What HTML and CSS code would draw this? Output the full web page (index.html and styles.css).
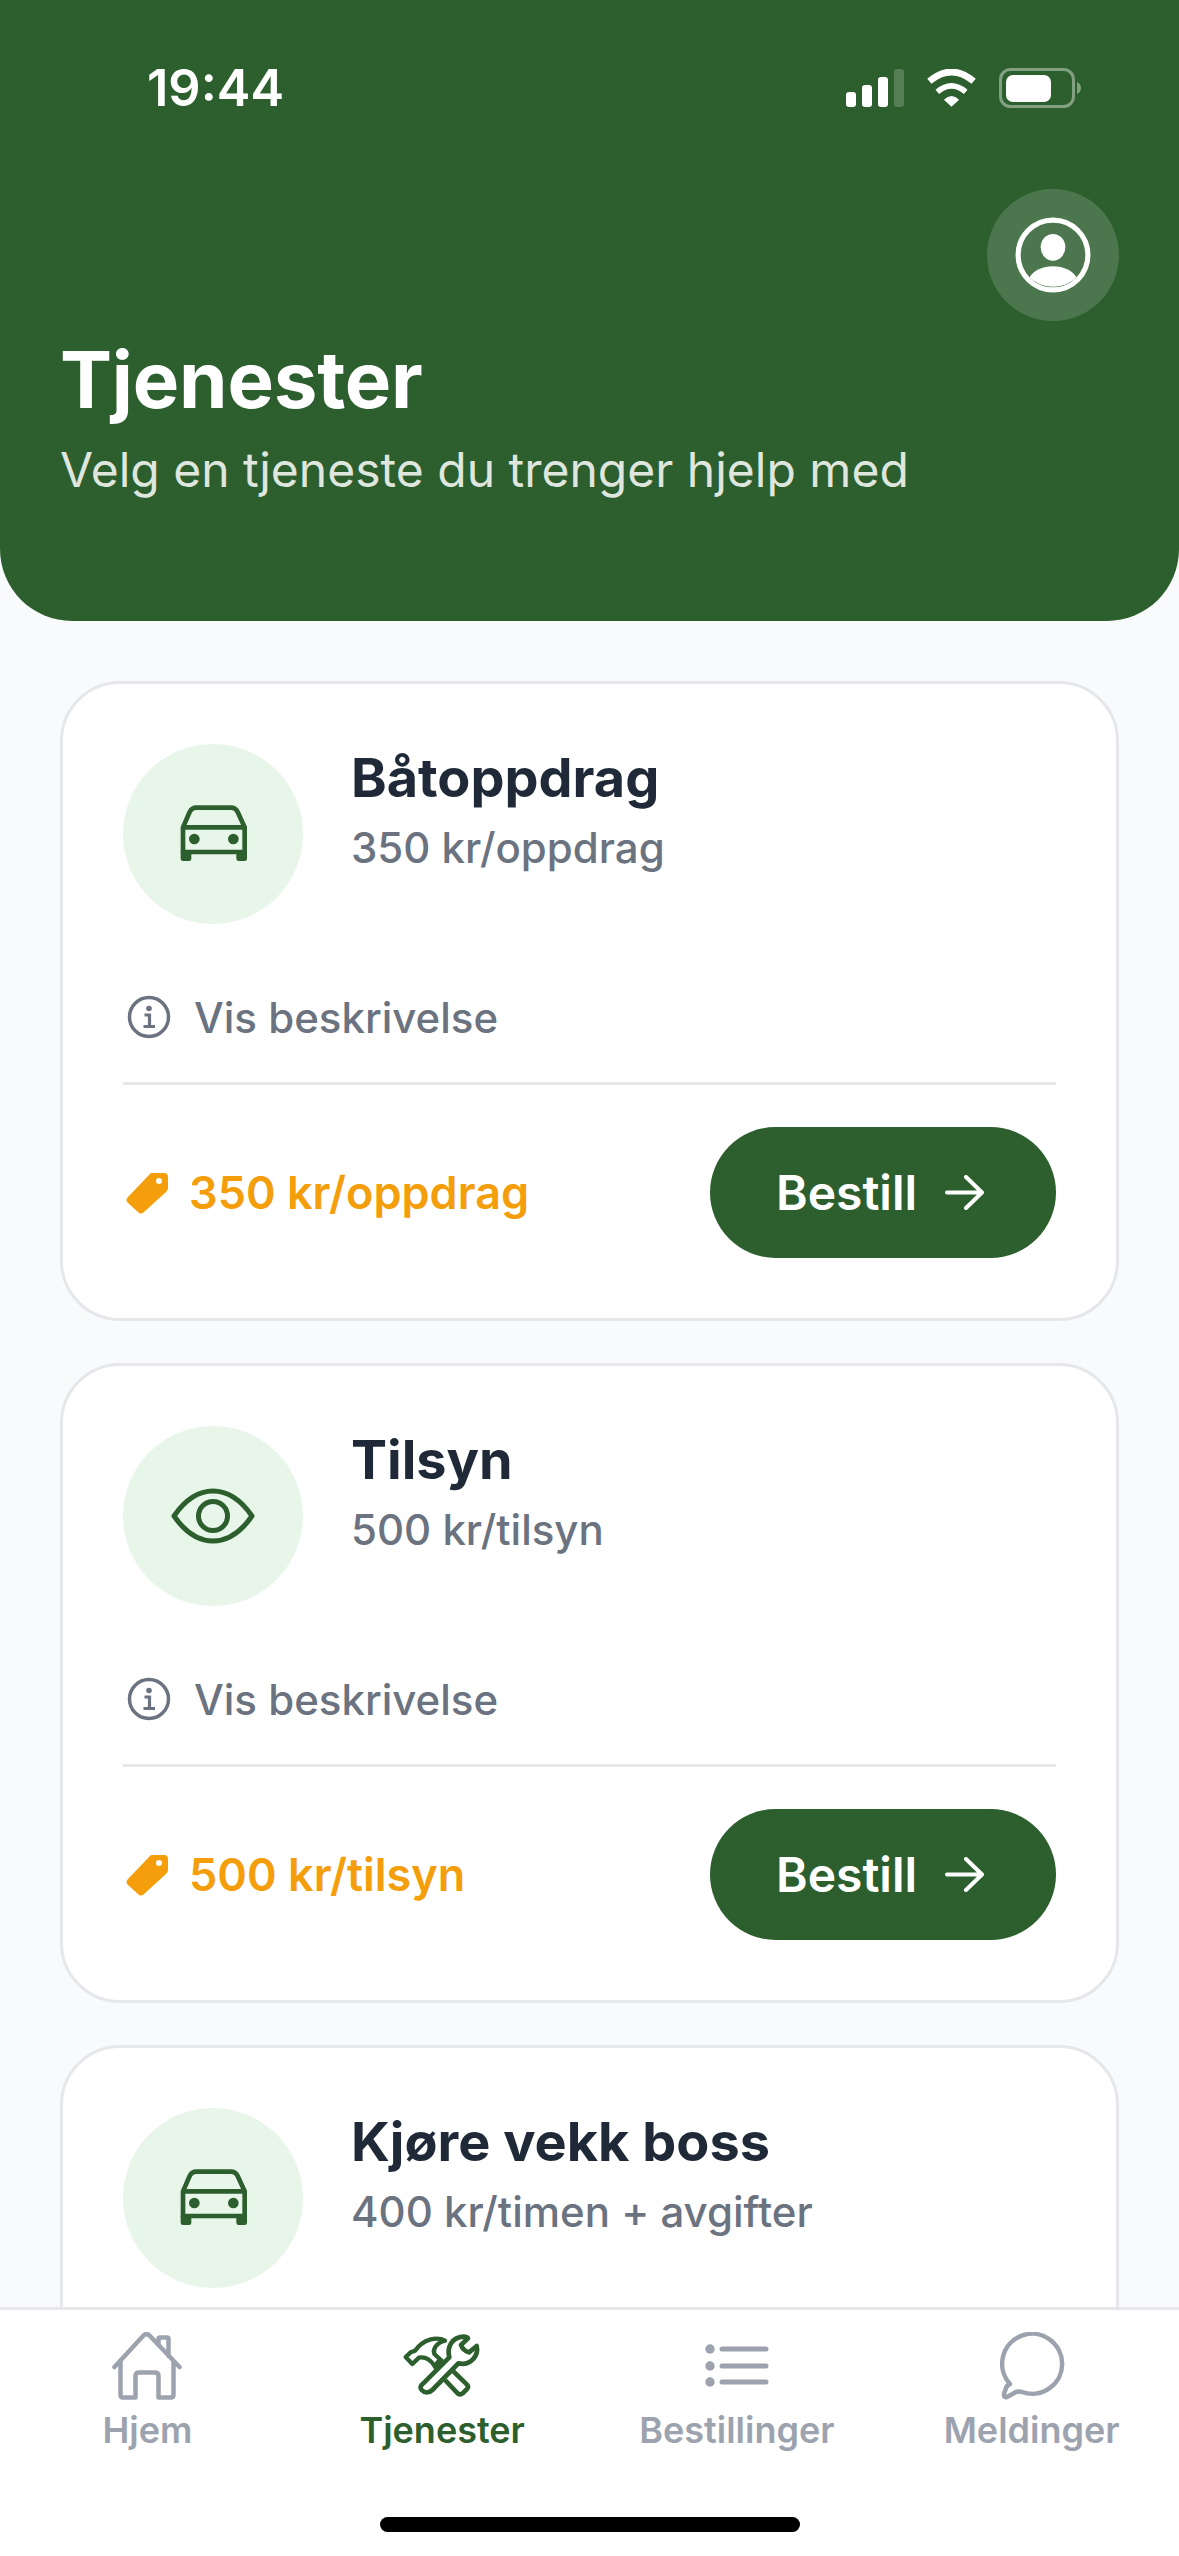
FILE: index.html
```html
<!DOCTYPE html>
<html lang="no">
  <head>
    <meta charset="utf-8">
    <meta name="viewport" content="width=device-width, initial-scale=1.0">
    <title>Tjenester</title>
    <link rel="stylesheet" href="styles.css">
  </head>
  <body>
    <header class="header">
      <div class="status-bar">
        <span class="time">19:44</span>
        <div class="status-icons">
          <svg class="signal" width="58" height="38" viewBox="0 0 58 38">
            <rect x="0" y="23" width="10" height="15" rx="3" fill="#fff"/>
            <rect x="16" y="16" width="10" height="22" rx="3" fill="#fff"/>
            <rect x="32" y="8" width="10" height="30" rx="3" fill="#fff"/>
            <rect x="48" y="0" width="10" height="38" rx="3" fill="#fff" opacity="0.2"/>
          </svg>
          <svg class="wifi" width="53" height="38" viewBox="375 85 160 115">
            <path d="M388 122 Q455 66 522 122" fill="none" stroke="#fff" stroke-width="20"/>
            <path d="M412 154 Q455 118 498 154" fill="none" stroke="#fff" stroke-width="17"/>
            <path d="M432 178 Q455 156 478 178 L455 199 Z" fill="#fff"/>
          </svg>
          <svg class="battery" width="83" height="40" viewBox="0 0 83 40">
            <rect x="1.5" y="1.5" width="73" height="37" rx="10" fill="none" stroke="#fff" stroke-opacity="0.4" stroke-width="3"/>
            <rect x="7" y="7" width="45" height="27" rx="7" fill="#fff"/>
            <path d="M78 14 Q82 16 82 20 Q82 24 78 26 Z" fill="#fff" opacity="0.4"/>
          </svg>
        </div>
      </div>
      <div class="profile-row">
        <button class="profile-btn">
          <svg width="76" height="76" viewBox="0 0 74 74">
            <circle cx="37" cy="37" r="34" fill="none" stroke="#fff" stroke-width="5"/>
            <ellipse cx="37" cy="29.5" rx="12" ry="13" fill="#fff"/>
            <path d="M14 59 C18 52 27 48 37 48 C47 48 56 52 60 59 A34 34 0 0 1 14 59 Z" fill="#fff"/>
          </svg>
        </button>
      </div>
      <h1>Tjenester</h1>
      <p class="subtitle">Velg en tjeneste du trenger hjelp med</p>
    </header>

    <main class="services">
      <section class="card">
        <div class="card-top">
          <div class="service-icon">
            <svg width="85" height="80" viewBox="0 12 255 240">
              <path d="M36 112 L56 66 Q62 53 76 53 H180 Q194 53 200 66 L221 112 V186 H36 Z M36 112 H221" fill="none" stroke="#2d5f2e" stroke-width="14" stroke-linejoin="round"/>
              <rect x="29" y="180" width="32" height="33" rx="7" fill="#2d5f2e"/>
              <rect x="196" y="180" width="32" height="33" rx="7" fill="#2d5f2e"/>
              <circle cx="70" cy="147" r="16" fill="#2d5f2e"/>
              <circle cx="187" cy="147" r="16" fill="#2d5f2e"/>
            </svg>
          </div>
          <div class="service-text">
            <h2>Båtoppdrag</h2>
            <p>350 kr/oppdrag</p>
          </div>
        </div>
        <div class="desc-toggle">
          <svg width="48" height="48" viewBox="0 0 48 48">
            <circle cx="24" cy="24" r="19.5" fill="none" stroke="#6b7280" stroke-width="3.5"/>
            <circle cx="24" cy="15.5" r="2.8" fill="#6b7280"/>
            <path d="M19.5 22 H24.5 V33 M18.5 33.5 H30" fill="none" stroke="#6b7280" stroke-width="3.2"/>
          </svg>
          <span>Vis beskrivelse</span>
        </div>
        <div class="card-footer">
          <div class="price">
            <svg width="42" height="42" viewBox="0 0 42 42">
              <path fill-rule="evenodd" d="M26 1 H38 Q42 1 42 5 V16 Q42 18 40 20 L18 40 Q15 43 12 40 L2 31 Q-1 28 2 25 L23 3 Q24 1 26 1 Z M33 6 A3 3 0 1 0 33 12 A3 3 0 1 0 33 6 Z" fill="#f59e0b"/>
            </svg>
            <span>350 kr/oppdrag</span>
          </div>
          <button class="order-btn">
            <span>Bestill</span>
            <svg width="39" height="35" viewBox="0 0 39 35">
              <path d="M2 17.5 H36 M21 2 L37 17.5 L21 33" fill="none" stroke="#fff" stroke-width="4" stroke-linecap="round" stroke-linejoin="round"/>
            </svg>
          </button>
        </div>
      </section>

      <section class="card">
        <div class="card-top">
          <div class="service-icon">
            <svg width="84" height="56" viewBox="0 0 84 56">
              <path d="M3 28 C12 15 25 3 42 3 C59 3 72 15 81 28 C72 41 59 53 42 53 C25 53 12 41 3 28 Z" fill="none" stroke="#2d5f2e" stroke-width="5" stroke-linejoin="round"/>
              <circle cx="42" cy="28" r="14.5" fill="none" stroke="#2d5f2e" stroke-width="5"/>
            </svg>
          </div>
          <div class="service-text">
            <h2>Tilsyn</h2>
            <p>500 kr/tilsyn</p>
          </div>
        </div>
        <div class="desc-toggle">
          <svg width="48" height="48" viewBox="0 0 48 48">
            <circle cx="24" cy="24" r="19.5" fill="none" stroke="#6b7280" stroke-width="3.5"/>
            <circle cx="24" cy="15.5" r="2.8" fill="#6b7280"/>
            <path d="M19.5 22 H24.5 V33 M18.5 33.5 H30" fill="none" stroke="#6b7280" stroke-width="3.2"/>
          </svg>
          <span>Vis beskrivelse</span>
        </div>
        <div class="card-footer">
          <div class="price">
            <svg width="42" height="42" viewBox="0 0 42 42">
              <path fill-rule="evenodd" d="M26 1 H38 Q42 1 42 5 V16 Q42 18 40 20 L18 40 Q15 43 12 40 L2 31 Q-1 28 2 25 L23 3 Q24 1 26 1 Z M33 6 A3 3 0 1 0 33 12 A3 3 0 1 0 33 6 Z" fill="#f59e0b"/>
            </svg>
            <span>500 kr/tilsyn</span>
          </div>
          <button class="order-btn">
            <span>Bestill</span>
            <svg width="39" height="35" viewBox="0 0 39 35">
              <path d="M2 17.5 H36 M21 2 L37 17.5 L21 33" fill="none" stroke="#fff" stroke-width="4" stroke-linecap="round" stroke-linejoin="round"/>
            </svg>
          </button>
        </div>
      </section>

      <section class="card">
        <div class="card-top">
          <div class="service-icon">
            <svg width="85" height="80" viewBox="0 12 255 240">
              <path d="M36 112 L56 66 Q62 53 76 53 H180 Q194 53 200 66 L221 112 V186 H36 Z M36 112 H221" fill="none" stroke="#2d5f2e" stroke-width="14" stroke-linejoin="round"/>
              <rect x="29" y="180" width="32" height="33" rx="7" fill="#2d5f2e"/>
              <rect x="196" y="180" width="32" height="33" rx="7" fill="#2d5f2e"/>
              <circle cx="70" cy="147" r="16" fill="#2d5f2e"/>
              <circle cx="187" cy="147" r="16" fill="#2d5f2e"/>
            </svg>
          </div>
          <div class="service-text">
            <h2>Kjøre vekk boss</h2>
            <p>400 kr/timen + avgifter</p>
          </div>
        </div>
      </section>
    </main>

    <nav class="tabbar">
      <div class="tabs">
        <a class="tab">
          <span class="tab-icon">
            <svg width="70" height="68" viewBox="0 0 70 68">
              <path d="M2.5 35 L31.5 3.5 Q34.5 0.5 37.5 3.5 L67.5 35 M8.5 29 V63 Q8.5 65.5 11 65.5 H23.5 V44 Q23.5 40.5 27 40.5 H43 Q46.5 40.5 46.5 44 V65.5 H59 Q61.5 65.5 61.5 63 V29 M46.5 13 V7 Q46.5 5.5 48 5.5 H55 Q56.5 5.5 56.5 7 V24" fill="none" stroke="#9ca3af" stroke-width="4.5" stroke-linecap="round" stroke-linejoin="round"/>
            </svg>
          </span>
          <span class="tab-label">Hjem</span>
        </a>
        <a class="tab active">
          <span class="tab-icon">
            <svg width="95" height="85" viewBox="0 0 285 255">
              <path d="M85 178 L163 100 C155 70 170 40 205 38 Q216 38 219 43 L198 63 Q204 80 222 85 L245 66 C252 95 226 126 190 118 L112 198 C102 208 88 207 81 199 C73 191 76 186 85 178 Z" fill="none" stroke="#2d5f2e" stroke-width="14" stroke-linejoin="round"/>
              <path d="M128 139 L118 125 C108 110 95 97 72 101 L52 120 L32 99 L47 85 L60 80 C85 46 125 36 150 50 C125 56 112 75 118 90 L142 112 M122 122 L130 113 L138 121 L130 130 Z" fill="none" stroke="#2d5f2e" stroke-width="13" stroke-linejoin="round"/>
              <path d="M150 168 L188 208 Q196 214 203 208 L216 195 Q222 188 216 182 L175 142" fill="none" stroke="#2d5f2e" stroke-width="14" stroke-linejoin="round"/>
            </svg>
          </span>
          <span class="tab-label">Tjenester</span>
        </a>
        <a class="tab">
          <span class="tab-icon">
            <svg width="66" height="44" viewBox="0 0 66 44">
              <circle cx="6" cy="5" r="4.7" fill="#9ca3af"/>
              <circle cx="6" cy="22" r="4.7" fill="#9ca3af"/>
              <circle cx="6" cy="38" r="4.7" fill="#9ca3af"/>
              <path d="M18 5 H62 M18 22 H62 M18 38 H62" fill="none" stroke="#9ca3af" stroke-width="5" stroke-linecap="round"/>
            </svg>
          </span>
          <span class="tab-label">Bestillinger</span>
        </a>
        <a class="tab">
          <span class="tab-icon">
            <svg width="66" height="68" viewBox="0 0 66 68">
              <path d="M11 52 A30 30 0 1 1 23 60 Q20 59 17 60 L8 65 Q4.5 66 5 62 L7 56 Q8 53 11 52 Z" fill="none" stroke="#9ca3af" stroke-width="4.5" stroke-linejoin="round"/>
            </svg>
          </span>
          <span class="tab-label">Meldinger</span>
        </a>
      </div>
      <div class="home-indicator"></div>
    </nav>
  </body>
</html>
```

FILE: styles.css
```css
* {
    box-sizing: border-box;
}

html,
body {
    margin: 0;
    height: 2556px;
}

body {
    display: flex;
    flex-direction: column;
    overflow: hidden;
    font-family: Inter, "Liberation Sans", sans-serif;
    background-color: #f9fafb;
}

/* header */

.header {
    flex-shrink: 0;
    height: 621px;
    padding: 68px 60px 0;
    background-color: #2d5f2e;
    border-radius: 0 0 72px 72px;
    color: #fff;
}

.status-bar {
    display: flex;
    justify-content: space-between;
    align-items: center;
    height: 40px;
    padding-left: 87px;
    padding-right: 37px;
}

.time {
    font-size: 50.5px;
    font-weight: 600;
    line-height: 40px;
}

.status-icons {
    display: flex;
    align-items: center;
}

.wifi {
    margin-left: 21px;
}

.battery {
    margin-left: 21px;
}

.profile-row {
    display: flex;
    justify-content: flex-end;
    margin-top: 81px;
}

.profile-btn {
    display: flex;
    align-items: center;
    justify-content: center;
    width: 132px;
    height: 132px;
    padding: 0;
    border: none;
    border-radius: 50%;
    background-color: rgba(255, 255, 255, 0.15);
}

h1 {
    margin: 14px 0 0;
    font-size: 78px;
    font-weight: 700;
    line-height: 90px;
    letter-spacing: -0.2px;
}

.subtitle {
    margin: 15px 0 0;
    font-size: 48px;
    line-height: 60px;
    color: rgba(255, 255, 255, 0.85);
}

/* cards */

.services {
    flex: 1;
    min-height: 0;
    overflow: hidden;
    display: flex;
    flex-direction: column;
    gap: 42px;
    padding: 60px 60px 0;
}

.card {
    flex-shrink: 0;
    height: 640px;
    padding: 60px;
    background-color: #fff;
    border: 3px solid #e5e7eb;
    border-radius: 60px;
}

.card-top {
    display: flex;
    gap: 48px;
}

.service-icon {
    display: flex;
    align-items: center;
    justify-content: center;
    flex-shrink: 0;
    width: 180px;
    height: 180px;
    border-radius: 50%;
    background-color: #e8f5e9;
}

h2 {
    margin: 2px 0 0;
    font-size: 54px;
    font-weight: 700;
    line-height: 64px;
    color: #1f2937;
}

.service-text p {
    margin: 11px 0 0;
    font-size: 42px;
    font-weight: 500;
    line-height: 54px;
    color: #6b7280;
}

.desc-toggle {
    display: flex;
    align-items: center;
    gap: 21px;
    height: 90px;
    margin-top: 48px;
    padding-left: 2px;
    font-size: 42px;
    font-weight: 500;
    color: #6b7280;
}

.card-footer {
    display: flex;
    justify-content: space-between;
    align-items: center;
    margin-top: 20px;
    padding-top: 42px;
    border-top: 3px solid #e5e7eb;
}

.price {
    display: flex;
    align-items: center;
    gap: 21px;
    padding-left: 3px;
    font-size: 45px;
    font-weight: 600;
    color: #f59e0b;
}

.order-btn {
    display: flex;
    align-items: center;
    justify-content: center;
    gap: 28px;
    width: 346px;
    height: 131px;
    padding: 0 6px 0 0;
    border: none;
    border-radius: 66px;
    background-color: #2d5f2e;
    color: #fff;
    font-family: inherit;
    font-size: 48px;
    font-weight: 600;
}

/* bottom tabs */

.tabbar {
    flex-shrink: 0;
    background-color: #fff;
    border-top: 3px solid #e5e7eb;
}

.tabs {
    display: grid;
    grid-template-columns: repeat(4, 1fr);
    padding-top: 20px;
}

.tab {
    display: flex;
    flex-direction: column;
    align-items: center;
    color: #9ca3af;
}

.tab.active {
    color: #2d5f2e;
}

.tab-icon {
    display: flex;
    align-items: center;
    justify-content: center;
    height: 72px;
}

.tab-label {
    margin-top: 6px;
    font-size: 36px;
    font-weight: 600;
    line-height: 44px;
}

.home-indicator {
    width: 420px;
    height: 15px;
    margin: 65px auto 24px;
    border-radius: 8px;
    background-color: #000;
}
```
